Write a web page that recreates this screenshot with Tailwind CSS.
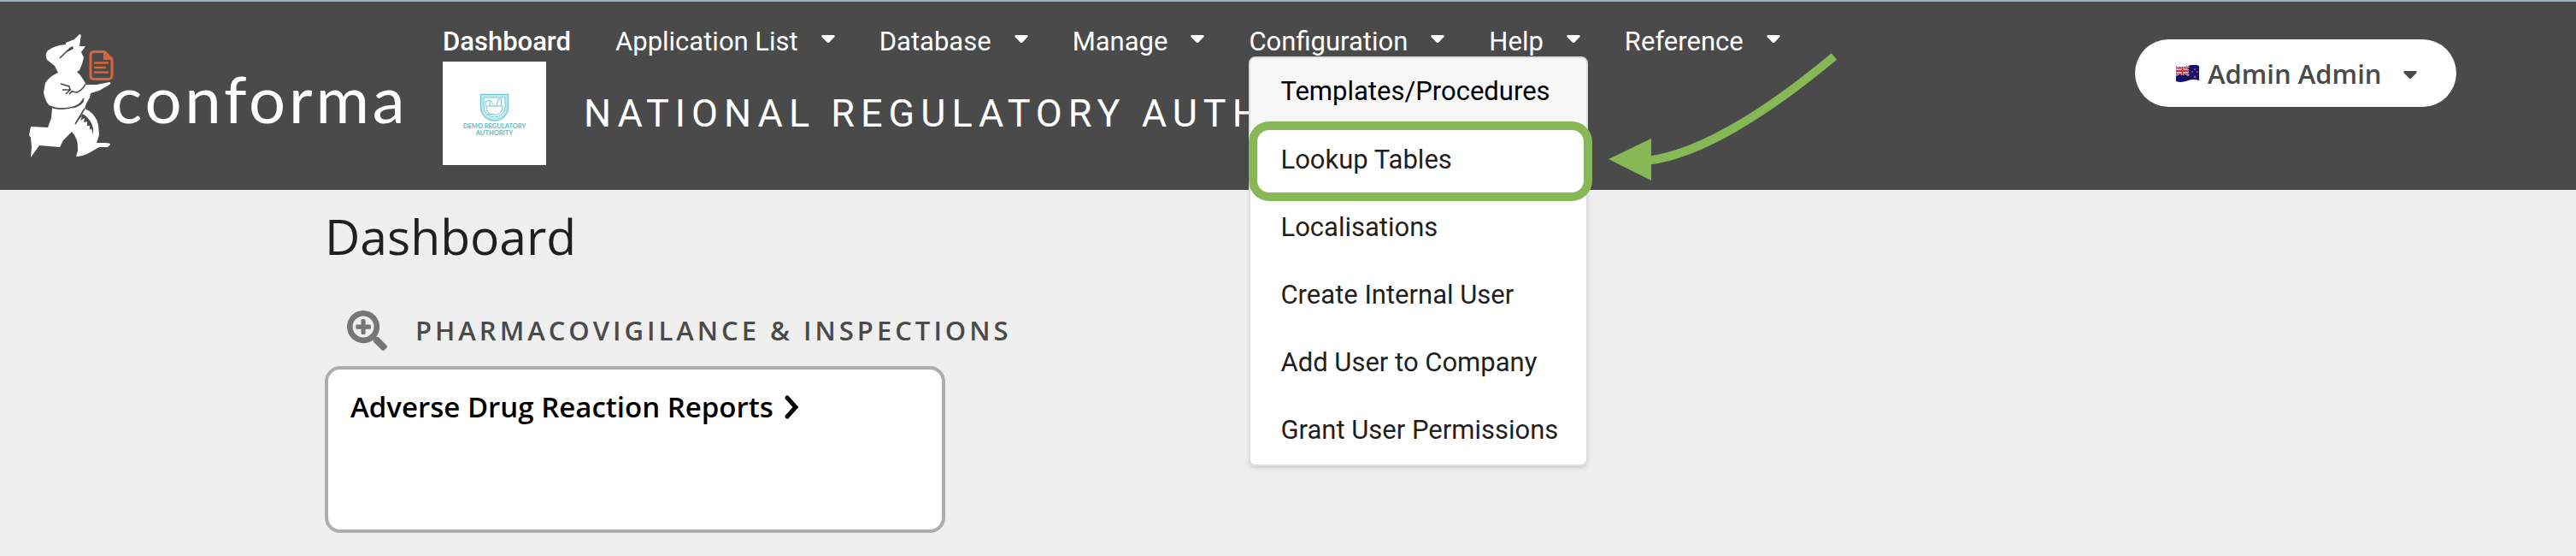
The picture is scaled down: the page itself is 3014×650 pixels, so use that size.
<!DOCTYPE html>
<html lang="en">
<head>
<meta charset="utf-8">
<title>Conforma – Dashboard</title>
<script src="https://cdn.jsdelivr.net/npm/@tailwindcss/browser@4"></script>
</head>
<body class="min-h-screen bg-[#efefef] font-['Open_Sans',sans-serif] text-[#1f1f1f]">
<svg class="hidden">
  <symbol id="caret" viewBox="0 0 16 10"><path d="M1.5 0h13q2 .6.8 2.200L9.300 8.400q-1.300 1.200-2.600 0L.7 2.200Q-.5.6 1.500 0z" fill="currentColor"/></symbol>
</svg>
<header class="relative flex items-start border-t-2 border-[#95b3ba] bg-[#4a4a4a] pr-[140px] pl-[34px]">
  <a href="#" aria-label="Conforma home" class="flex w-[484px] shrink-0 pt-[38px] pb-[36px] text-white">
    <svg class="h-[146px] w-[100px] shrink-0" viewBox="34 40 100 146">
      <path fill="#fff" d="M93 40Q95 40 94.500 43L93 54L100 54L95 61L98 67L96 75L93 82L90 84L94 88L98 94L101 99L113 99L128 96Q131 97 128 99L116 106L106 109L105 114L101 121L99 127Q112 132 115 146L116 158L113 167L121 167Q130 167 129 169L126 172L116 172L104 179Q96 183 89 183L91 176Q92 162 84 154L74 164L70 172L46 170L41 177L36 184L37 172L36 161L34 158L36 148L56 149L60 138L61 126Q53 121 51 108L53 97Q58 89 68 85L64 77L55 70Q52 63 56 59Q64 53 77 52L77 50L87 46z"/>
      <path fill="none" stroke="#4a4a4a" stroke-width="1.600" d="M70 68L79 59L85 55M58 124Q68 129 82 126Q94 124 98 115M71 98L81 101L82 105L73 105M83 104L77 110M85 106L81 110M84 107L90 108Q97 105 100 98M99 127L88 145"/>
      <path fill="#4a4a4a" d="M81 56L85 54L86 57L78 61zM97 116L98 119Q93 125 84 127Q94 122 97 116zM88 144L97 133Q107 140 109 150L109 158L107 150L105 152L105 147L102 147L102 142L98 143L99 138L94 141L96 136z"/>
      <path fill="none" stroke="#dc6336" stroke-width="3" stroke-linejoin="round" d="M110 60.500h12l9 9v18q0 5-4 5h-17q-4 0-4-4v-24q0-4 4-4z"/>
      <path fill="#dc6336" d="M121 60h3l8 8v2h-11z"/>
      <path fill="none" stroke="#dc6336" stroke-width="2.400" stroke-linecap="round" d="M111 73.500h15M111 79h12M111 84.500h15"/>
    </svg>
    <span class="-ml-1 pt-[27px] font-['Lato',sans-serif] text-[76px] leading-[96px] tracking-wider">conforma</span>
  </a>
  <div class="flex min-w-0 grow flex-col pt-[26px]">
    <nav aria-label="Main" class="flex gap-[52px] text-white font-['Roboto',sans-serif] text-[31px] leading-[42px]">
      <a href="#" class="font-medium">Dashboard</a>
      <button type="button" class="flex gap-[27px]">Application List<svg class="mt-[13px] h-[10px] w-4"><use href="#caret"/></svg></button>
      <button type="button" class="flex gap-[27px]">Database<svg class="mt-[13px] h-[10px] w-4"><use href="#caret"/></svg></button>
      <button type="button" class="flex gap-[27px]">Manage<svg class="mt-[13px] h-[10px] w-4"><use href="#caret"/></svg></button>
      <div class="relative">
        <button type="button" aria-expanded="true" class="flex gap-[27px]">Configuration<svg class="mt-[13px] h-[10px] w-4"><use href="#caret"/></svg></button>
        <ul class="absolute top-[38px] left-0 z-10 w-[397px] overflow-hidden rounded-lg border-2 border-[#dededf] bg-white text-[#1f1f1f] shadow-md">
          <li><a href="#" class="block bg-[#f7f7f7] px-[35px] pt-[18px] pb-5 text-black">Templates/Procedures</a></li>
          <li><a href="#" class="block px-[35px] pt-[18px] pb-[19px]">Lookup Tables</a></li>
          <li><a href="#" class="block px-[35px] pt-[18px] pb-[19px]">Localisations</a></li>
          <li><a href="#" class="block px-[35px] pt-[18px] pb-[19px]">Create Internal User</a></li>
          <li><a href="#" class="block px-[35px] pt-[18px] pb-[19px]">Add User to Company</a></li>
          <li><a href="#" class="block px-[35px] pt-[18px] pb-[19px] whitespace-nowrap">Grant User Permissions</a></li>
        </ul>
        <div class="pointer-events-none absolute top-[114px] left-0 z-20 h-[93px] w-[402px] rounded-[24px] border-10 border-[#86b955]"></div>
        <svg class="pointer-events-none absolute top-[32px] left-[420px] z-20 h-[154px] w-[270px]" viewBox="1880 60 270 154"><path d="M2145 66Q2010 178 1926 188" fill="none" stroke="#86b955" stroke-width="10"/><path d="M1881 186L1931 162V211z" fill="#86b955"/></svg>
      </div>
      <button type="button" class="flex gap-[27px]">Help<svg class="mt-[13px] h-[10px] w-4"><use href="#caret"/></svg></button>
      <button type="button" class="flex gap-[27px]">Reference<svg class="mt-[13px] h-[10px] w-4"><use href="#caret"/></svg></button>
    </nav>
    <div class="mt-[2px] mb-[29px] flex items-center gap-[44px] text-white">
      <svg class="size-[121px] shrink-0 bg-white" viewBox="518 72 121 121" role="img" aria-label="Demo Regulatory Authority">
        <path d="M563.500 111.500h30v14a15 14.500 0 0 1-30 0z" fill="none" stroke="#bfe6ea" stroke-width="4"/>
        <g fill="none" stroke="#6cc6cf" stroke-width="1"><path d="M562.500 110.500h32v15a16 15.500 0 0 1-32 0z"/><path d="M566 114h25v11a12.500 12 0 0 1-25 0z"/><path d="M569 124h19q0 8-6 10h-7q-6-2-6-10zM568 124v-5l5-2 6 7M573 117v7M581 124l2-8h4l-1 8M570 133q4 2 7 0"/></g>
        <g fill="#5fb9c2" text-anchor="middle" font-family="Lato, sans-serif" font-size="7.500" font-weight="700"><text x="578.500" y="149.500">DEMO REGULATORY</text><text x="578.500" y="158">AUTHORITY</text></g>
      </svg>
      <span class="font-['Roboto',sans-serif] text-[45px] leading-[60px] tracking-[7px] whitespace-nowrap">NATIONAL REGULATORY AUTHORITY</span>
    </div>
  </div>
  <button type="button" class="mt-[44px] flex h-[79px] w-[376px] shrink-0 items-center rounded-full bg-white pl-12 text-[#4a4a4a]">
    <svg class="mr-[10px] h-[20px] w-[27px]" viewBox="0 0 27 20"><path d="M0 1.500Q7 4 14 1T27 1V18Q20 16 13 18.500T0 19z" fill="#14146c"/><path d="M0 2.500L15 12M15 1.500L0 12" stroke="#fff" stroke-width="2.400"/><path d="M0 2.500L15 12M15 1.500L0 12" stroke="#d8293a" stroke-width="1.200"/><path d="M7.500 2v10M0 7h15" stroke="#fff" stroke-width="3.400"/><path d="M7.500 2v10M0 7h15" stroke="#d8293a" stroke-width="2.200"/><g fill="#d84b60"><circle cx="22" cy="5" r="1"/><circle cx="19" cy="8" r="1"/><circle cx="25" cy="8" r="1"/><circle cx="22" cy="14" r="1.200"/></g></svg>
    <span class="text-[31px] leading-[44px] font-semibold">Admin Admin</span>
    <svg class="mt-1 ml-[26px] h-[10px] w-4"><use href="#caret"/></svg>
  </button>
</header>
<main class="px-[380px] pt-[18px]">
  <h1 class="text-[57px] leading-[72px]">Dashboard</h1>
  <h2 class="mt-[44px] flex h-[60px] items-center gap-[33px] pl-[26px] text-[31px] font-semibold tracking-[4px] text-[#4a4a4a]">
    <svg class="size-[47px]" viewBox="0 0 512 512" fill="#767676"><path d="M304 192v32c0 6.600-5.400 12-12 12h-56v56c0 6.600-5.400 12-12 12h-32c-6.600 0-12-5.400-12-12v-56h-56c-6.600 0-12-5.400-12-12v-32c0-6.600 5.400-12 12-12h56v-56c0-6.600 5.400-12 12-12h32c6.600 0 12 5.400 12 12v56h56c6.600 0 12 5.400 12 12zm201 284.700L476.700 505c-9.400 9.400-24.600 9.400-33.900 0L343 405.300c-4.500-4.500-7-10.600-7-17V372c-35.300 27.600-79.700 44-128 44C93.100 416 0 322.900 0 208S93.100 0 208 0s208 93.100 208 208c0 48.300-16.400 92.700-44 128h16.300c6.400 0 12.500 2.500 17 7l99.700 99.700c9.300 9.400 9.300 24.600 0 34zM344 208c0-75.200-60.800-136-136-136S72 132.800 72 208s60.800 136 136 136 136-60.800 136-136z"/></svg>
    PHARMACOVIGILANCE &amp; INSPECTIONS
  </h2>
  <section class="mt-3 h-[195px] w-[726px] rounded-[18px] border-4 border-[#adadad] bg-white px-[26px] pt-[22px]">
    <a href="#" class="flex items-center gap-3 text-[33px] leading-[44px] font-semibold text-black">Adverse Drug Reaction Reports
      <svg class="h-[30px] w-[20px]" viewBox="0 0 20 30"><path d="M4 4l10 11L4 26" fill="none" stroke="#000" stroke-width="5" stroke-linecap="round"/></svg></a>
  </section>
</main>
</body>
</html>
